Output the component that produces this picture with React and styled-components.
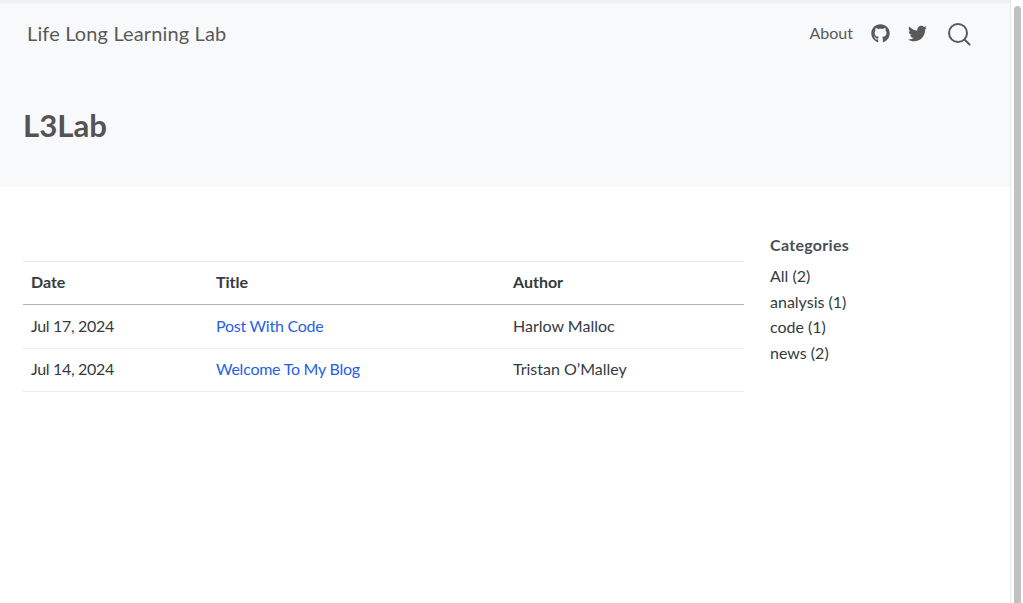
import React from "react";
import styled, { createGlobalStyle } from "styled-components";
import { FaGithub, FaTwitter } from "react-icons/fa";

const Global = createGlobalStyle`
  html, body { margin: 0; padding: 0; height: 100%; overflow: hidden; background: #fff; }
  body { font-family: Lato, "Noto Sans", sans-serif; color: #343a40; font-size: 16px; }
  #root { height: 100%; }
`;

const Page = styled.div`
  display: flex;
  height: 603px;
`;
const Main = styled.div`
  flex: 1;
  min-width: 0;
  display: flex;
  flex-direction: column;
`;
const ScrollTrack = styled.div`
  width: 13px;
  flex: none;
  box-sizing: border-box;
  border-left: 1px solid #e8e8e8;
  background: #fff;
  padding: 6px 2px 0 3px;
`;
const ScrollThumb = styled.div`
  height: 100%;
  background: #c1c1c1;
  border-radius: 4px 4px 0 0;
`;
const Header = styled.header`
  background: #f8f9fa;
  border-top: 3px solid #eff0f2;
  height: 184px;
  flex: none;
`;
const Navbar = styled.nav`
  display: flex;
  align-items: center;
  justify-content: space-between;
  height: 61px;
  padding: 0 39px 0 27px;
`;
const Brand = styled.a`
  font-size: 20px;
  letter-spacing: 0.14px;
  color: #595959;
  margin-top: -2px;
`;
const NavItems = styled.div`
  display: flex;
  align-items: center;
`;
const NavLink = styled.a`
  font-size: 16px;
  color: #595959;
  margin-top: -2px;
`;
const IconLink = styled.span`
  display: flex;
  color: #595959;
  margin-left: ${(p) => p.$gap}px;
`;
const PageTitle = styled.h1`
  margin: 0;
  padding: 43px 0 0 23px;
  font-size: 31.2px;
  line-height: 36px;
  font-weight: 700;
  color: #545454;
`;
const Content = styled.div`
  display: flex;
  padding: 47px 0 0 23px;
`;
const Table = styled.table`
  width: 721px;
  border-collapse: collapse;
  table-layout: fixed;
  margin-top: 27px;
  align-self: flex-start;
  font-size: 16px;
`;
const HeadCell = styled.th`
  text-align: left;
  font-weight: 700;
  color: #343a40;
  height: 43px;
  padding: 0 8px 4px;
  box-sizing: border-box;
  border-top: 1px solid #e9ecef;
  border-bottom: 1px solid #adb5bd;
  width: ${(p) => p.$w}px;
`;
const Cell = styled.td`
  height: ${(p) => p.$h}px;
  padding: 0 8px ${(p) => p.$pb}px;
  box-sizing: border-box;
  color: #343a40;
  letter-spacing: ${(p) => p.$ls || 0}px;
  border-bottom: 1px solid #e9ecef;
`;
const PostLink = styled.a`
  color: #2761e3;
`;
const Sidebar = styled.aside`
  margin-left: 26px;
  padding-top: 1px;
`;
const SideTitle = styled.div`
  font-weight: 700;
  font-size: 16px;
  line-height: 20px;
  letter-spacing: 0.3px;
  color: #484f56;
  margin-bottom: 8px;
`;
const CatItem = styled.div`
  font-size: 16px;
  line-height: 25.6px;
  color: #343a40;
`;

const posts = [
  { date: "Jul 17, 2024", title: "Post With Code", author: "Harlow Malloc", h: 44, pb: 2 },
  { date: "Jul 14, 2024", title: "Welcome To My Blog", author: "Tristan O’Malley", h: 43, pb: 4 },
];
const cats = ["All (2)", "analysis (1)", "code (1)", "news (2)"];

export default function App() {
  return (
    <Page>
      <Global />
      <Main>
        <Header>
          <Navbar>
            <Brand>Life Long Learning Lab</Brand>
            <NavItems>
              <NavLink>About</NavLink>
              <IconLink $gap={18}><FaGithub size={19} /></IconLink>
              <IconLink $gap={18}><FaTwitter size={19} /></IconLink>
              <IconLink $gap={20}>
                <svg width="24" height="24" viewBox="0 0 24 24" fill="none" stroke="currentColor" strokeWidth="2" strokeLinecap="round">
                  <circle cx="11" cy="11" r="9" />
                  <path d="M18 18l4.5 4.5" />
                </svg>
              </IconLink>
            </NavItems>
          </Navbar>
          <PageTitle>L3Lab</PageTitle>
        </Header>
        <Content>
          <Table>
            <thead>
              <tr>
                <HeadCell $w={185}>Date</HeadCell>
                <HeadCell $w={297}>Title</HeadCell>
                <HeadCell $w={239}>Author</HeadCell>
              </tr>
            </thead>
            <tbody>
              {posts.map((p) => (
                <tr key={p.title}>
                  <Cell $h={p.h} $pb={p.pb} $ls={-0.32}>{p.date}</Cell>
                  <Cell $h={p.h} $pb={p.pb} $ls={-0.25}><PostLink>{p.title}</PostLink></Cell>
                  <Cell $h={p.h} $pb={p.pb}>{p.author}</Cell>
                </tr>
              ))}
            </tbody>
          </Table>
          <Sidebar>
            <SideTitle>Categories</SideTitle>
            {cats.map((c) => <CatItem key={c}>{c}</CatItem>)}
          </Sidebar>
        </Content>
      </Main>
      <ScrollTrack><ScrollThumb /></ScrollTrack>
    </Page>
  );
}
